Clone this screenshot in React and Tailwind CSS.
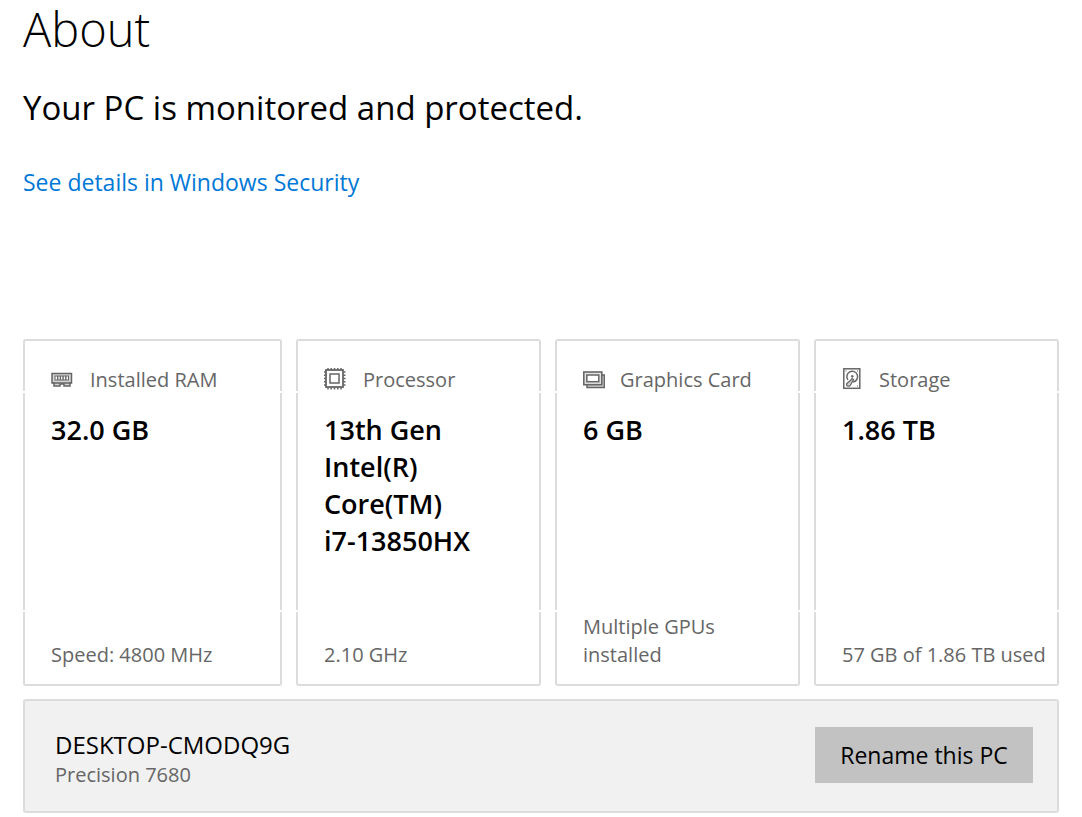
const iconProps = {
  fill: 'none',
  stroke: '#666666',
  className: 'shrink-0',
  'aria-hidden': true,
}

function RamIcon() {
  return (
    <svg width="22" height="22" viewBox="0 0 22 22" {...iconProps}>
      <path d="M1 5.500h19.500v9.500h-1.500v3h-6v-2H9v2H3v-3H1z" fill="#d4d4d4" strokeWidth="1.500" />
      <path d="M2 15h18" strokeWidth="1.500" />
      <rect x="4" y="8" width="13.500" height="4" fill="#fff" />
      <path d="M6.700 8v4M9.400 8v4M12.100 8v4M14.800 8v4" strokeWidth="1.400" />
    </svg>
  )
}

function CpuIcon() {
  return (
    <svg width="22" height="22" viewBox="0 0 22 22" {...iconProps}>
      <rect x="2" y="2" width="17" height="17" strokeWidth="1.800" />
      <rect x="6" y="6" width="9" height="9" strokeWidth="1.500" />
      <path
        d="M4 0v2M7.200 0v2M10.500 0v2M13.800 0v2M17 0v2M4 19.500v2M7.200 19.500v2M10.500 19.500v2M13.800 19.500v2M17 19.500v2M0 4h2M0 7.200h2M0 10.500h2M0 13.800h2M0 17h2M19.500 4h2M19.500 7.200h2M19.500 10.500h2M19.500 13.800h2M19.500 17h2"
        strokeWidth="1.500"
      />
    </svg>
  )
}

function GpuIcon() {
  return (
    <svg width="22" height="22" viewBox="0 0 22 22" {...iconProps}>
      <path d="M19 7h2.300v12.500H4V16.500" fill="#d4d4d4" strokeWidth="1.500" />
      <rect x="0.800" y="4" width="18" height="12.700" fill="#e4e4e4" strokeWidth="1.600" />
      <rect x="3.800" y="7" width="12" height="6.700" fill="#fff" strokeWidth="1.500" />
    </svg>
  )
}

function DiskIcon() {
  return (
    <svg width="22" height="22" viewBox="0 0 22 22" {...iconProps}>
      <rect x="1.800" y="0.800" width="16" height="19.500" strokeWidth="1.500" />
      <path d="M6 12a5.400 5.400 0 1 1 5 2" strokeWidth="1.500" />
      <path d="M10 10.500l1.500 1-3 5.500c-.8 1.200-2.200 1.600-3.300.8-.8-.6-.8-1.800-.1-2.600l3-2.400z" fill="#d4d4d4" strokeWidth="1.300" />
      <circle cx="10.300" cy="8.300" r="0.900" fill="#666666" />
      <path d="M3.500 3h1M15 3h1M15 18h1" />
    </svg>
  )
}

const specs = [
  { label: 'Installed RAM', icon: RamIcon, value: '32.0 GB', detail: 'Speed: 4800 MHz', gap: 'gap-[17px]' },
  { label: 'Processor', icon: CpuIcon, value: '13th Gen Intel(R) Core(TM) i7-13850HX', detail: '2.10 GHz', gap: 'gap-[17px]' },
  { label: 'Graphics Card', icon: GpuIcon, value: '6 GB', detail: 'Multiple GPUs installed', gap: 'gap-[15px]' },
  { label: 'Storage', icon: DiskIcon, value: '1.86 TB', detail: '57 GB of 1.86 TB used', gap: 'gap-[15px]' },
]

function SpecCard({ label, icon: Icon, value, detail, gap }) {
  return (
    <section className="flex flex-col gap-[2px]">
      <header className={`flex items-center h-[52px] pt-[25px] pl-[26px] border-2 border-b-0 border-[#dcdcdc] rounded-t-[3px] ${gap}`}>
        <Icon />
        <h3 className="pt-[2px] text-[20px] leading-[26px] text-[#666666] whitespace-nowrap">{label}</h3>
      </header>
      <p className="flex-1 min-h-[217px] pt-[18px] pl-[26px] pr-16 border-x-2 border-[#dcdcdc] text-[27px] leading-[37px] font-semibold">
        {value}
      </p>
      <footer className="flex flex-col justify-end min-h-[74px] pl-[26px] pb-[15px] pr-1 border-2 border-t-0 border-[#dcdcdc] rounded-b-[3px]">
        <p className="text-[20px] leading-7 text-[#666666]">{detail}</p>
      </footer>
    </section>
  )
}

export default function App() {
  return (
    <main className="min-h-screen bg-white text-black px-[23px] font-['Open_Sans','Noto_Sans',sans-serif]">
      <h1 className="text-[47px] leading-[58px] font-light">About</h1>
      <h2 className="mt-[26px] text-[33px] leading-[48px]">Your PC is monitored and protected.</h2>
      <a href="#security" className="inline-block mt-8 text-[23px] leading-9 text-[#0078d7]">
        See details in Windows Security
      </a>

      {/* Hardware overview */}
      <div className="mt-[139px] grid grid-cols-[259fr_245fr_245fr_245fr] gap-[14px]">
        {specs.map(spec => (
          <SpecCard key={spec.label} {...spec} />
        ))}
      </div>

      {/* Device name */}
      <section className="mt-[13px] flex items-center justify-between h-[114px] pl-[30px] pr-6 pb-[2px] bg-[#f1f1f1] border-2 border-[#dcdcdc] rounded-[3px]">
        <div className="pt-2">
          <p className="text-[24px] leading-8">DESKTOP-CMODQ9G</p>
          <p className="text-[20px] leading-7 text-[#666666]">Precision 7680</p>
        </div>
        <button type="button" className="w-[218px] h-14 bg-[#c2c2c2] text-[23px] leading-8 whitespace-nowrap">
          Rename this PC
        </button>
      </section>
    </main>
  )
}
